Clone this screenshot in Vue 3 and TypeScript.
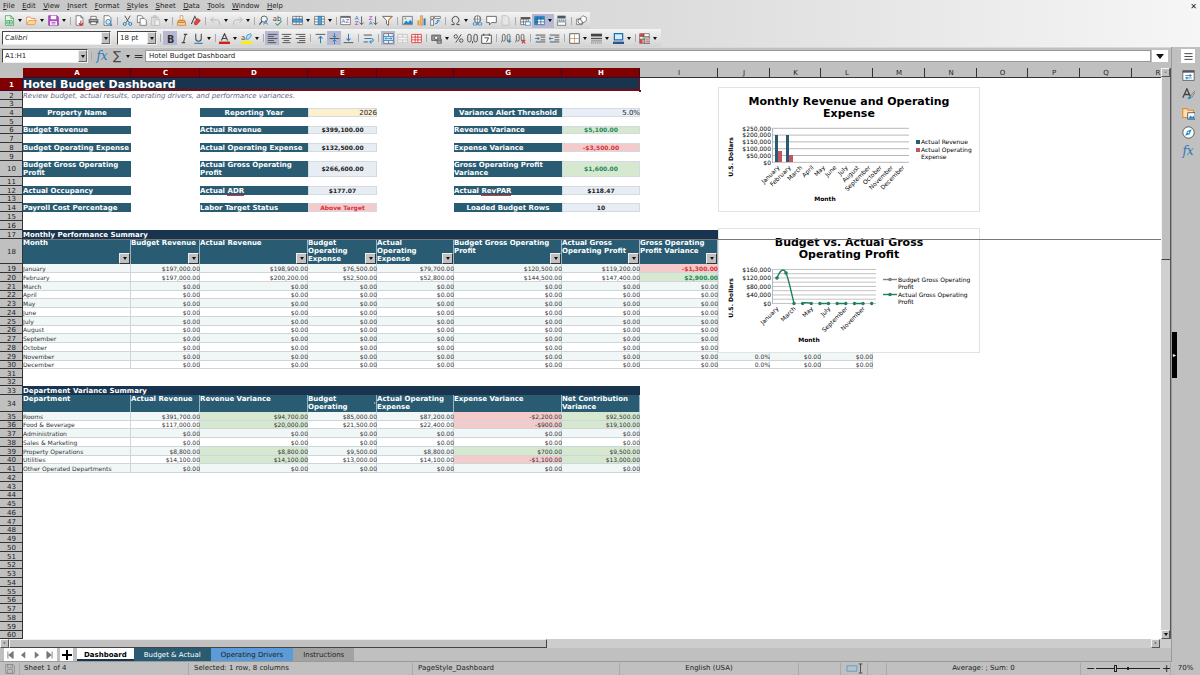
<script setup lang="ts">
import { ref } from 'vue'

type Cell = { text: string; cls: string; span?: number; flagged?: string; filter?: boolean }
type Row = { n: number; height: number; cells: Cell[] }
type Tool = { kind: 'icon' | 'arrow' | 'sep'; name: string; on?: boolean }

const menus = ['File', 'Edit', 'View', 'Insert', 'Format', 'Styles', 'Sheet', 'Data', 'Tools', 'Window', 'Help']

const page = '<path d="M3 1h7l3 3v11H3z" fill="#fff" stroke="#555"/>'
const lines = (xs: number[][]) =>
  xs.map(([x1, x2, y]) => `<path d="M${x1} ${y}H${x2}" stroke="#555" stroke-width="1.4"/>`).join('')

const icons: Record<string, string> = {
  new: '<path d="M2 1h8l4 4v10H2z" fill="#e9f7ec" stroke="#2f9a4b"/><path d="M4 8h8v5H4zM4 10.500h8M8 8v5" fill="none" stroke="#2f9a4b"/><path d="M10 1v4h4" fill="none" stroke="#2f9a4b"/>',
  open: '<path d="M1 13V3h5l1.500 2H13v3" fill="#fff" stroke="#e08a2c" stroke-width="1.200"/><path d="M1 14l3-6h11l-2.500 6z" fill="#fbd59b" stroke="#e08a2c"/>',
  save: '<path d="M1 1h12l2 2v12H1z" fill="#b04cc0" stroke="#8e2fa3"/><path d="M4 1h8v5H4zM3 9h10v6H3z" fill="#fff"/><path d="M5 11h6M5 13h6" stroke="#8e2fa3"/>',
  pdf: page + '<path d="M10 1v3h3" fill="none" stroke="#555"/><path d="M10 8v7M7 12l3 3 3-3" stroke="#d2342e" stroke-width="1.600" fill="none"/>',
  print: '<path d="M4 2h8v4H4z" fill="#fff" stroke="#555"/><path d="M1 6h14v6H1z" fill="#666"/><path d="M3 8h10" stroke="#ccc"/><path d="M4 10h8v4H4z" fill="#fff" stroke="#555"/>',
  preview: page + '<circle cx="9" cy="10" r="3.500" fill="#d6ecfa" stroke="#1e7fc2" stroke-width="1.300"/><path d="M11.500 12.500l3 3" stroke="#1e7fc2" stroke-width="1.500"/>',
  cut: '<path d="M4 1l6 10M12 1L6 11" stroke="#555" stroke-width="1.400"/><circle cx="4" cy="13" r="2.200" fill="none" stroke="#1e7fc2" stroke-width="1.400"/><circle cx="12" cy="13" r="2.200" fill="none" stroke="#1e7fc2" stroke-width="1.400"/>',
  copy: '<path d="M2 1h6l2 2v8H2z" fill="#fff" stroke="#555"/><path d="M6 5h6l3 3v7H6z" fill="#fff" stroke="#555"/>',
  paste: '<path d="M2 3h10v12H2zM5 1h4v3H5z" fill="#ddd" stroke="#b5b5b5"/><path d="M7 7h7v8H7z" fill="#eee" stroke="#b5b5b5"/>',
  clone: '<path d="M6 1h4v6H6z" fill="#fff" stroke="#d9812a"/><path d="M3 8h10v3H3z" fill="#f3b26b" stroke="#c96f1a"/><path d="M2 11h12v4H2z" fill="#f8d3a2" stroke="#c96f1a"/>',
  clear: '<path d="M2 13L7 2l3 6" fill="none" stroke="#444" stroke-width="1.500"/><path d="M6 11l5-6 4 3-5 6H7z" fill="#e2433b" stroke="#b52a23"/>',
  undo: '<path d="M5 3L1 7l4 4M1 7h8q5 0 5 7" fill="none" stroke="#b9b9b9" stroke-width="1.400"/>',
  redo: '<path d="M11 3l4 4-4 4M15 7H7q-5 0-5 7" fill="none" stroke="#b9b9b9" stroke-width="1.400"/>',
  find: '<circle cx="9" cy="6" r="4.500" fill="#eaf5fc" stroke="#555" stroke-width="1.300"/><path d="M6 9l-4 5" stroke="#555" stroke-width="1.800"/><path d="M8 14l3-6 3 6M9 12h4" stroke="#1e7fc2" fill="none"/>',
  spell: '<text x="1" y="9" font-size="10" font-family="DejaVu Sans" fill="#444">ab</text><path d="M5 12l3 3 6-6" fill="none" stroke="#2f9a6b" stroke-width="1.500"/>',
  row: '<path d="M1 2h14v12H1zM1 6h14M1 10h14M6 2v12M10.500 2v12" fill="#fff" stroke="#555"/><path d="M1 6h14v4H1z" fill="#4ba3e0" stroke="#1e6fae"/>',
  column: '<path d="M1 2h14v12H1zM1 6h14M1 10h14" fill="#fff" stroke="#555"/><path d="M6 2h5v12H6z" fill="#4ba3e0" stroke="#1e6fae"/>',
  sort: '<path d="M1 2h14v12H1z" fill="#fff" stroke="#555"/><path d="M1 2h14v2H1z" fill="#555"/><text x="2" y="12" font-size="8" font-family="DejaVu Sans" fill="#1e7fc2">A</text><text x="8" y="12" font-size="8" font-family="DejaVu Sans" fill="#a23bb5">Z</text>',
  asc: '<text x="1" y="7" font-size="8" font-family="DejaVu Sans" fill="#1e7fc2">A</text><text x="1" y="15" font-size="8" font-family="DejaVu Sans" fill="#a23bb5">Z</text><path d="M11 2v12M8 11l3 3 3-3" fill="none" stroke="#555" stroke-width="1.300"/>',
  desc: '<text x="1" y="7" font-size="8" font-family="DejaVu Sans" fill="#a23bb5">Z</text><text x="1" y="15" font-size="8" font-family="DejaVu Sans" fill="#1e7fc2">A</text><path d="M11 2v12M8 11l3 3 3-3" fill="none" stroke="#555" stroke-width="1.300"/>',
  filter: '<path d="M1 2h14L9.500 8v7l-3-2V8z" fill="#fff" stroke="#555" stroke-width="1.200"/><path d="M9 8l5-5" stroke="#e79a3c" stroke-width="2.200"/>',
  image: '<path d="M1 2h14v12H1z" fill="#dff0fb" stroke="#555"/><path d="M2 13l4-5 3 3 3-4 3 4v2z" fill="#2584c6"/><circle cx="5" cy="5" r="1.500" fill="#e79a3c"/>',
  chart: '<path d="M2 8h3v7H2z" fill="#e79a3c"/><path d="M6.500 1h3v14h-3z" fill="#f3b968" stroke="#d9812a" stroke-width=".8"/><path d="M11 5h3v10h-3z" fill="#2584c6"/>',
  pivot: '<path d="M1 2h4v4H1zM6.500 2H15v3H6.500zM1 7h4v8H1z" fill="#fff" stroke="#555"/><path d="M7 13q5 0 5-5M9.500 9.500L12 7l2.500 2.500" fill="none" stroke="#1e7fc2" stroke-width="1.400"/>',
  omega: '<path d="M2 14h4v-1.500Q2.500 10 3 6.500 4 2 8 2t5 4.500Q13.500 10 10 12.500V14h4" fill="none" stroke="#444" stroke-width="1.400"/>',
  link: '<circle cx="8" cy="6" r="5" fill="#fff" stroke="#555"/><path d="M3 6h10M8 1v10M5 2q-1.500 4 0 8M11 2q1.500 4 0 8" fill="none" stroke="#555" stroke-width=".8"/><path d="M2 11.500h5v3H2zM9 11.500h5v3H9zM6 13h4" fill="#fff" stroke="#1e7fc2" stroke-width="1.200"/>',
  comment: '<path d="M1 2h14v9H8l-3 3.500V11H1z" fill="#fff" stroke="#555" stroke-width="1.200"/>',
  header: '<path d="M3 1h7l3 3v11H3z" fill="#e6e6e6" stroke="#b5b5b5"/>',
  define: '<path d="M1 3h14v3H1z" fill="#555"/><path d="M1 6h11v8H1zM1 10h11M5 6v8M9 6v8" fill="#fff" stroke="#555"/><path d="M8 10h7v5H8z" fill="#fff" stroke="#1e7fc2"/>',
  freeze: '<path d="M1 2h14v12H1z" fill="#fff" stroke="#1c5f96"/><path d="M1 2h14v4H1zM1 6h4v8H1z" fill="#2584c6"/><path d="M1 6h14M5 2v12M10 2v12M1 10h14" stroke="#1c5f96"/>',
  split: '<path d="M2 1h12v4H2z" fill="#555"/><path d="M2 10h12v5H2z" fill="#fff" stroke="#555"/><path d="M1 7.500h14" stroke="#1e7fc2" stroke-width="1.400" stroke-dasharray="2 1"/>',
  shapes: '<path d="M1 6h8v8H1z" fill="#fff" stroke="#555"/><circle cx="7" cy="9" r="4" fill="none" stroke="#555"/><path d="M10 1l5 2.500v5L11 11 7 8V4z" fill="#fff" stroke="#555"/>',
  bold: '<text x="3" y="14" font-size="14" font-weight="700" font-family="DejaVu Sans" fill="#333">B</text>',
  italic: '<path d="M7 2h5M4 14h5M9.500 2L6.500 14" stroke="#444" stroke-width="1.500"/>',
  underline: '<path d="M4 1v7q0 4 4 4t4-4V1" fill="none" stroke="#444" stroke-width="1.500"/><path d="M2 15h12" stroke="#1e7fc2" stroke-width="1.600"/>',
  color: '<path d="M3.500 11L8 1l4.500 10M5 8h6" fill="none" stroke="#444" stroke-width="1.600"/><path d="M0 12.500h16V16H0z" fill="#c9211e"/>',
  highlight: '<text x="0" y="10" font-size="10" font-family="DejaVu Sans" fill="#444">a</text><path d="M7 9l2-6 5-2 1 3-4 5z" fill="#bcdcf3" stroke="#1e7fc2"/><path d="M0 12h16v4H0z" fill="#ffee00"/>',
  left: lines([[1, 15, 2], [1, 10, 5], [1, 15, 8], [1, 10, 11], [1, 13, 14]]),
  center: lines([[1, 15, 2], [4, 12, 5], [1, 15, 8], [4, 12, 11], [2, 14, 14]]),
  right: lines([[1, 15, 2], [6, 15, 5], [1, 15, 8], [6, 15, 11], [3, 15, 14]]),
  top: lines([[1, 15, 2]]) + '<path d="M8 15V5M5 8l3-3 3 3" fill="none" stroke="#1e7fc2" stroke-width="1.500"/>',
  middle: lines([[1, 15, 8]]) + '<path d="M8 0v6M5.500 4L8 6.500 10.500 4M8 16v-6M5.500 12L8 9.500l2.500 2.500" fill="none" stroke="#1e7fc2" stroke-width="1.300"/>',
  bottom: lines([[1, 15, 14]]) + '<path d="M8 1v10M5 8l3 3 3-3" fill="none" stroke="#1e7fc2" stroke-width="1.500"/>',
  wrap: lines([[1, 13, 3], [1, 7, 13]]) + '<path d="M2 8h10q3 0 3 2.500T12 13h-2M12 10.500L9.500 13l2.500 2.500" fill="none" stroke="#1e7fc2" stroke-width="1.400"/>',
  mergecenter: '<path d="M1 1h14v14H1zM1 5h14M1 11h14M8 1v4M8 11v4" fill="#fff" stroke="#555"/><path d="M1 5h14v6H1z" fill="#d6ecfa" stroke="#1e7fc2"/><path d="M3 8h10M5 6.500L3 8l2 1.500M11 6.500L13 8l-2 1.500" fill="none" stroke="#1e7fc2"/>',
  merge: '<path d="M1 2h14v12H1zM1 6h14M1 10h14M8 2v4M8 10v4" fill="#f2f2f2" stroke="#bbb"/>',
  unmerge: '<path d="M1 2h14v12H1zM1 6h14M1 10h14M6 2v12M10 2v12" fill="#fff" stroke="#d2342e" stroke-width="1.200"/>',
  currency: '<path d="M1 3h13v8H1z" fill="#999" stroke="#444"/><circle cx="7.500" cy="7" r="2.500" fill="#fff" stroke="#444"/><path d="M9 9h6v6H9z" fill="#ddd" stroke="#444"/><path d="M9 11h6M9 13h6" stroke="#444"/>',
  percent: '<circle cx="4" cy="5" r="2.500" fill="none" stroke="#444" stroke-width="1.300"/><circle cx="12" cy="11" r="2.500" fill="none" stroke="#444" stroke-width="1.300"/><path d="M12 2L4 14" stroke="#444" stroke-width="1.300"/>',
  number: '<rect x="1" y="2" width="5" height="11" rx="2.500" fill="none" stroke="#444" stroke-width="1.300"/><rect x="10" y="2" width="5" height="11" rx="2.500" fill="none" stroke="#444" stroke-width="1.300"/><path d="M8 12v3" stroke="#444" stroke-width="1.400"/>',
  date: '<path d="M1 3h14v12H1z" fill="#fff" stroke="#444" stroke-width="1.300"/><path d="M4 1v3M12 1v3" stroke="#444" stroke-width="1.400"/><path d="M5 7h6l-3 6" fill="none" stroke="#444" stroke-width="1.400"/>',
  adddec: '<rect x="2" y="2" width="4" height="10" rx="2" fill="none" stroke="#555" stroke-width="1.200"/><rect x="9" y="2" width="4" height="10" rx="2" fill="none" stroke="#555" stroke-width="1.200"/><path d="M.5 11v3" stroke="#555"/><path d="M9 12h6M12 9v6" stroke="#1e7fc2" stroke-width="1.500"/>',
  deldec: '<rect x="2" y="2" width="4" height="10" rx="2" fill="none" stroke="#555" stroke-width="1.200"/><rect x="9" y="2" width="4" height="10" rx="2" fill="none" stroke="#555" stroke-width="1.200"/><path d="M.5 11v3" stroke="#555"/><path d="M10 10l5 5M15 10l-5 5" stroke="#d2342e" stroke-width="1.500"/>',
  indent: lines([[1, 15, 3], [8, 15, 6], [8, 15, 10], [1, 15, 13]]) + '<path d="M0 8h6M3.500 5.500L6 8l-2.500 2.500" fill="none" stroke="#1e7fc2" stroke-width="1.300"/>',
  outdent: lines([[1, 15, 3], [8, 15, 6], [8, 15, 10], [1, 15, 13]]) + '<path d="M6 8H0M2.500 5.500L0 8l2.500 2.500" fill="none" stroke="#1e7fc2" stroke-width="1.300"/>',
  borders: '<path d="M1 1h14v14H1z" fill="#fff" stroke="#555" stroke-width="1.300"/><path d="M8 2v12M2 8h12" stroke="#c9863c"/>',
  style: '<path d="M0 1h16v4H0z" fill="#444"/><path d="M0 8h16" stroke="#555" stroke-width="2"/><path d="M0 11.500h16" stroke="#555"/><path d="M0 14.500h16" stroke="#555" stroke-dasharray="2 1"/>',
  bcolor: '<path d="M2 1h12v9H2z" fill="#d6ecfa" stroke="#1e6fae" stroke-width="1.800"/><path d="M0 12.500h16V16H0z" fill="#26588f"/>',
  cond: '<path d="M1 1h14v14H1z" fill="#fff" stroke="#555"/><path d="M1 1h7v4H1zM1 9h4v6H1z" fill="#e2433b"/><path d="M1 5h14M1 9h14M6 1v14" stroke="#555"/><path d="M8 7h8v8H8z" fill="#ddd" stroke="#555"/><path d="M9.500 10h5M9.500 12.500h5" stroke="#d2342e"/>',
  menu: '<path d="M3 4.500h10M3 8h10M3 11.500h10" stroke="#444" stroke-width="1.200"/>',
  properties: '<path d="M1 2h14v12H1z" fill="#fff" stroke="#555"/><path d="M1 2h14v2.500H1z" fill="#555"/><path d="M4 8h8M4 11h8" stroke="#2584c6"/><path d="M10 6.500v3M6 9.500v3" stroke="#1e7fc2" stroke-width="1.500"/>',
  styles: '<path d="M1 12L6 1l4 9M3 8h6" fill="none" stroke="#444" stroke-width="1.600"/><path d="M15.500 4l-5 6 1.500 1.500 4-6z" fill="#ddd" stroke="#555" stroke-width=".8"/><path d="M7 14q1-5 4-3.500 2 2.500-4 3.500z" fill="#2584c6"/>',
  gallery: '<path d="M1 13V2h5l1.500 2H14v9z" fill="#fce0b5" stroke="#e08a2c" stroke-width="1.300"/><path d="M7 7h9v8H7z" fill="#fff" stroke="#444"/><path d="M7.500 14.500l3-4 2 2 1.500-2 1.500 4z" fill="#2584c6"/>',
  navigator: '<circle cx="8" cy="8" r="7" fill="#fff" stroke="#555" stroke-width="1.200"/><path d="M12 4l-2.500 6L4 12l2.500-6z" fill="#2a8fcb"/><circle cx="8" cy="8" r="1" fill="#fff"/>',
}

const i = (name: string, on = false): Tool => ({ kind: 'icon', name, on })
const a = (name: string): Tool => ({ kind: 'arrow', name })
const s: Tool = { kind: 'sep', name: '' }

const standardBar: Tool[] = [
  i('new'), a('new'), i('open'), a('open'), i('save'), a('save'), s,
  i('pdf'), i('print'), i('preview'), s, i('cut'), i('copy'), i('paste'), a('paste'), s,
  i('clone'), i('clear'), s, i('undo'), a('undo'), i('redo'), a('redo'), s, i('find'), i('spell'), s,
  i('row'), a('row'), i('column'), a('column'), s, i('sort'), i('asc'), i('desc'), i('filter'), s,
  i('image'), i('chart'), i('pivot'), s, i('omega'), a('omega'), i('link'), i('comment'), i('header'), s,
  i('define'), i('freeze', true), { kind: 'arrow', name: 'freeze', on: true }, i('split'), s, i('shapes'),
]
const formatBar: Tool[] = [
  s, i('bold', true), i('italic'), i('underline'), a('underline'), s, i('color'), a('color'), i('highlight'), a('highlight'), s,
  i('left', true), i('center'), i('right'), s, i('top'), i('middle', true), i('bottom'), s, i('wrap'), s,
  i('mergecenter', true), i('merge'), i('unmerge'), s, i('currency'), a('currency'), i('percent'), i('number'), i('date'), s,
  i('adddec'), i('deldec'), s, i('indent'), i('outdent'), s, i('borders'), a('borders'), i('style'), a('style'),
  i('bcolor'), a('bcolor'), s, i('cond'), a('cond'),
]

const columns = [
  { name: 'A', width: 108 }, { name: 'C', width: 69 }, { name: 'D', width: 108 }, { name: 'E', width: 69 },
  { name: 'F', width: 77 }, { name: 'G', width: 108 }, { name: 'H', width: 78 }, { name: 'I', width: 78 },
  { name: 'J', width: 52 }, { name: 'K', width: 51 }, { name: 'L', width: 52 }, { name: 'M', width: 52 },
  { name: 'N', width: 52 }, { name: 'O', width: 51 }, { name: 'P', width: 52 }, { name: 'Q', width: 52 },
  { name: 'R', width: 52 },
]
const selectedColumns = 7

const c = (text = '', cls = '', extra: Partial<Cell> = {}): Cell => ({ text, cls, ...extra })
const blank = (): Cell => c()

const kpi = (l1: string, l2: string, v2: Cell, l3: string, v3: Cell): Cell[] => [
  c(l1, 'label'), blank(), c(l2, 'label'), v2, blank(), c(l3, 'label'), v3,
]
const months = ['January', 'February', 'March', 'April', 'May', 'June', 'July', 'August', 'September', 'October', 'November', 'December']
const loaded: Record<string, string[]> = {
  January: ['$197,000.00', '$198,900.00', '$76,500.00', '$79,700.00', '$120,500.00', '$119,200.00', '-$1,300.00'],
  February: ['$197,000.00', '$200,200.00', '$52,500.00', '$52,800.00', '$144,500.00', '$147,400.00', '$2,900.00'],
}
const departments: [string, string[]][] = [
  ['Rooms', ['$391,700.00', '$94,700.00', '$85,000.00', '$87,200.00', '-$2,200.00', '$92,500.00']],
  ['Food & Beverage', ['$117,000.00', '$20,000.00', '$21,500.00', '$22,400.00', '-$900.00', '$19,100.00']],
  ['Administration', []],
  ['Sales & Marketing', []],
  ['Property Operations', ['$8,800.00', '$8,800.00', '$9,500.00', '$8,800.00', '$700.00', '$9,500.00']],
  ['Utilities', ['$14,100.00', '$14,100.00', '$13,000.00', '$14,100.00', '-$1,100.00', '$13,000.00']],
  ['Other Operated Departments', []],
]
const tone = (v: string) => (v === '$0.00' ? '' : v.startsWith('-') ? ' bad' : ' good')

const content: Record<number, Cell[]> = {
  1: [c('Hotel Budget Dashboard', 'title', { span: 7 })],
  2: [c('Review budget, actual results, operating drivers, and performance variances.', 'subtitle', { span: 7 })],
  4: [c('Property Name', 'label mid'), blank(), c('Reporting Year', 'label mid'), c('2026', 'entry year'), blank(),
    c('Variance Alert Threshold', 'label mid'), c('5.0%', 'entry')],
  6: kpi('Budget Revenue', 'Actual Revenue', c('$399,100.00', 'value'), 'Revenue Variance', c('$5,100.00', 'value good strong')),
  8: kpi('Budget Operating Expense', 'Actual Operating Expense', c('$132,500.00', 'value'), 'Expense Variance', c('-$3,500.00', 'value bad strong')),
  10: kpi('Budget Gross Operating\nProfit', 'Actual Gross Operating\nProfit', c('$266,600.00', 'value'), 'Gross Operating Profit\nVariance', c('$1,600.00', 'value good strong')),
  12: [c('Actual Occupancy', 'label'), blank(), c('Actual ', 'label', { flagged: 'ADR' }), c('$177.07', 'value'), blank(),
    c('Actual ', 'label', { flagged: 'RevPAR' }), c('$118.47', 'value')],
  14: [c('Payroll Cost Percentage', 'label'), blank(), c('Labor Target Status', 'label'), c('Above Target', 'value bad strong'), blank(),
    c('Loaded Budget Rows', 'label mid'), c('10', 'value')],
  17: [c('Monthly Performance Summary', 'section', { span: 8 })],
  18: ['Month', 'Budget Revenue', 'Actual Revenue', 'Budget\nOperating\nExpense', 'Actual\nOperating\nExpense',
    'Budget Gross Operating\nProfit', 'Actual Gross\nOperating Profit', 'Gross Operating\nProfit Variance'].map((t) => c(t, 'head', { filter: true })),
  33: [c('Department Variance Summary', 'section', { span: 7 })],
  34: ['Department', 'Actual Revenue', 'Revenue Variance', 'Budget\nOperating', 'Actual Operating\nExpense', 'Expense Variance',
    'Net Contribution\nVariance'].map((t, k) => c(t, k === 3 ? 'head overflow' : 'head')),
}
months.forEach((m, k) => {
  const band = k % 2 === 0 ? ' band' : ''
  const values = loaded[m] ?? Array(7).fill('$0.00')
  const row = [c(m, 'data name' + band), ...values.map((v, n) => c(v, 'data' + band + (n === 6 && tone(v) ? tone(v) + ' strong' : '')))]
  if (k >= 10) row.push(c('0.0%', 'data' + band), c('$0.00', 'data' + band), c('$0.00', 'data' + band))
  content[19 + k] = row
})
departments.forEach(([name, list], k) => {
  const band = k % 2 === 0 ? ' band' : ''
  const values = list.length ? list : Array(6).fill('$0.00')
  content[35 + k] = [c(name, 'data name' + band), ...values.map((v, n) => c(v, 'data' + band + ([1, 4, 5].includes(n) ? tone(v) : '')))]
})

const tall: Record<number, number> = { 1: 13, 10: 16, 18: 25, 34: 17 }
const short = [3, 6, 13, 22, 26, 30, 32, 36, 40, 44, 48, 52, 56, 60]
const rows: Row[] = Array.from({ length: 60 }, (_, k) => {
  const n = k + 1
  const cells = [...(content[n] ?? [])]
  const used = cells.reduce((sum, cell) => sum + (cell.span ?? 1), 0)
  for (let x = used; x < columns.length; x++) cells.push(blank())
  return { n, height: tall[n] ?? (short.includes(n) ? 8 : 9), cells }
})

const profitMonths = ['January', 'March', 'May', 'July', 'September', 'November']
const dots = Array.from({ length: 10 }, (_, k) => 76 + k * 8.63)

const tabs = [
  { name: 'Dashboard', cls: 'active' },
  { name: 'Budget & Actual', cls: 'teal' },
  { name: 'Operating Drivers', cls: 'blue' },
  { name: 'Instructions', cls: 'plain' },
]
const fontName = ref('Calibri')
const fontSize = ref('18 pt')
const cellRange = ref('A1:H1')
const formula = ref('Hotel Budget Dashboard')
const zoom = ref(29)
</script>

<template>
  <div class="app">
    <header class="top">
      <div class="menubar">
        <nav class="menus">
          <button v-for="m in menus" :key="m"><u>{{ m[0] }}</u>{{ m.slice(1) }}</button>
        </nav>
        <button class="close" aria-label="Close document">✕</button>
      </div>
      <div class="toolbar">
        <template v-for="(t, k) in standardBar" :key="k">
          <span v-if="t.kind === 'sep'" class="sep"></span>
          <button v-else-if="t.kind === 'arrow'" class="arrow" :class="{ on: t.on }" :aria-label="t.name + ' options'"><i class="caret"></i></button>
          <button v-else class="tool" :class="{ on: t.on }" :aria-label="t.name"><svg viewBox="0 0 16 16" v-html="icons[t.name]"></svg></button>
        </template>
      </div>
      <div class="toolbar">
        <span class="combo font"><input v-model="fontName" aria-label="Font name" /><button aria-label="Choose font"><i class="caret"></i></button></span>
        <span class="combo size"><input v-model="fontSize" aria-label="Font size" /><button aria-label="Choose size"><i class="caret"></i></button></span>
        <template v-for="(t, k) in formatBar" :key="k">
          <span v-if="t.kind === 'sep'" class="sep"></span>
          <button v-else-if="t.kind === 'arrow'" class="arrow" :aria-label="t.name + ' options'"><i class="caret"></i></button>
          <button v-else class="tool" :class="{ on: t.on }" :aria-label="t.name"><svg viewBox="0 0 16 16" v-html="icons[t.name]"></svg></button>
        </template>
      </div>
    </header>

    <div class="body">
      <main class="main">
        <div class="formulabar">
          <span class="combo range"><input v-model="cellRange" aria-label="Name box" /><button aria-label="Named ranges"><i class="caret"></i></button></span>
          <span class="sep"></span>
          <button class="fx" aria-label="Function wizard">fx</button>
          <button class="sigma" aria-label="Select function">∑</button>
          <button class="arrow" aria-label="Function list"><i class="caret"></i></button>
          <button class="equals" aria-label="Formula">=</button>
          <input v-model="formula" class="formula" aria-label="Input line" />
          <button class="expand" aria-label="Expand formula bar"><i class="caret big"></i></button>
        </div>

        <div class="sheetarea">
          <div class="sheet">
            <table>
              <colgroup>
                <col class="rowcol" />
                <col v-for="col in columns" :key="col.name" :style="{ width: col.width + 'px' }" />
              </colgroup>
              <thead>
                <tr>
                  <th class="corner"></th>
                  <th v-for="(col, k) in columns" :key="col.name" :class="{ picked: k < selectedColumns }">{{ col.name }}</th>
                </tr>
              </thead>
              <tbody>
                <tr v-for="row in rows" :key="row.n" :style="{ height: row.height + 'px' }">
                  <th scope="row" :class="{ picked: row.n === 1 }">{{ row.n }}</th>
                  <td v-for="(cell, k) in row.cells" :key="k" :colspan="cell.span ?? 1" :class="cell.cls">{{ cell.text }}<span v-if="cell.flagged" class="flagged">{{ cell.flagged }}</span><button v-if="cell.filter" class="filter" :aria-label="'Filter ' + cell.text"><i class="caret"></i></button></td>
                </tr>
              </tbody>
            </table>

            <svg class="chart first" viewBox="0 0 262 125" role="img" aria-label="Monthly Revenue and Operating Expense">
              <rect x="0.500" y="0.500" width="261" height="124" fill="#fff" stroke="#e2e2e2" />
              <text class="ctitle" x="131" y="18">Monthly Revenue and Operating</text>
              <text class="ctitle" x="131" y="30">Expense</text>
              <path v-for="k in 6" :key="k" :d="`M54 ${34.5 + k * 6.8}H191`" stroke="#b8b8b8" />
              <path d="M54.500 41v34.500" stroke="#b8b8b8" />
              <text v-for="(t, k) in ['$250,000', '$200,000', '$150,000', '$100,000', '$50,000', '$0']" :key="t" class="axis" x="53" :y="43.500 + k * 6.8">{{ t }}</text>
              <path d="M57 48h3v27h-3zM68 48h3v27h-3z" fill="#285a72" />
              <path d="M60 64h4v11h-4zM71 68h4v7h-4z" fill="#c4575e" />
              <text v-for="(m, k) in months" :key="m" class="axis" :transform="`translate(${62 + k * 11.36} 81) rotate(-45)`">{{ m }}</text>
              <text class="caption" x="107" y="114">Month</text>
              <text class="caption" transform="translate(15 70) rotate(-90)">U.S. Dollars</text>
              <path d="M198 53h4v4h-4z" fill="#285a72" />
              <path d="M198 61h4v4h-4z" fill="#c4575e" />
              <text class="legend" x="203" y="57">Actual Revenue</text>
              <text class="legend" x="203" y="65">Actual Operating</text>
              <text class="legend" x="203" y="72">Expense</text>
            </svg>

            <svg class="chart second" viewBox="0 0 262 125" role="img" aria-label="Budget vs. Actual Gross Operating Profit">
              <rect x="0.500" y="0.500" width="261" height="124" fill="#fff" stroke="#e2e2e2" />
              <text class="ctitle" x="131" y="18">Budget vs. Actual Gross</text>
              <text class="ctitle" x="131" y="30">Operating Profit</text>
              <path v-for="k in 9" :key="k" :d="`M54 ${37.2 + k * 4.25}H158`" stroke="#c2c2c2" />
              <path d="M54.500 41v34.500" stroke="#b8b8b8" />
              <text v-for="(t, k) in ['$160,000', '$120,000', '$80,000', '$40,000', '$0']" :key="t" class="axis" x="53" :y="43.500 + k * 8.5">{{ t }}</text>
              <path d="M59 50C61 45 63 42 65 42s2 1 3 3c3 7 6 23 8 30M85 75q4-1 8 .5M102 75.500h9M119 75.500h9M136 75.500h9" fill="none" stroke="#1d8060" stroke-width="1.400" />
              <circle cx="59" cy="50" r="1.800" fill="#1d8060" />
              <circle cx="68" cy="45" r="1.800" fill="#1d8060" />
              <circle v-for="x in dots" :key="x" :cx="x" cy="75.500" r="1.700" fill="#1d8060" />
              <text v-for="(m, k) in profitMonths" :key="m" class="axis" :transform="`translate(${61 + k * 17.26} 81) rotate(-45)`">{{ m }}</text>
              <text class="caption" x="91" y="114">Month</text>
              <text class="caption" transform="translate(15 70) rotate(-90)">U.S. Dollars</text>
              <path d="M165 51.500h14" stroke="#7d8585" stroke-width="1.400" />
              <circle cx="172" cy="51.500" r="1.800" fill="#7d8585" />
              <path d="M165 66.500h14" stroke="#1d8060" stroke-width="1.400" />
              <circle cx="172" cy="66.500" r="1.800" fill="#1d8060" />
              <text class="legend" x="180" y="54">Budget Gross Operating</text>
              <text class="legend" x="180" y="61">Profit</text>
              <text class="legend" x="180" y="69">Actual Gross Operating</text>
              <text class="legend" x="180" y="76">Profit</text>
            </svg>
            <div class="freezeline"></div>
          </div>
          <div class="vscroll">
            <button aria-label="Scroll up">-</button>
            <span class="vthumb"></span>
            <span class="vtrack"></span>
            <button aria-label="Scroll down"><i class="caret"></i></button>
          </div>
        </div>

        <div class="hscroll">
          <button aria-label="Scroll left">‹</button>
          <span class="hthumb"></span>
          <span class="htrack"></span>
          <button class="next" aria-label="Scroll right">›</button>
        </div>

        <div class="tabs">
          <div class="tabnav">
            <button aria-label="First sheet"><svg viewBox="0 0 8 8"><path d="M1 0v8M7 0L2 4l5 4z" fill="#777" stroke="#777" /></svg></button>
            <button aria-label="Previous sheet"><svg viewBox="0 0 8 8"><path d="M6 0L1 4l5 4z" fill="#777" /></svg></button>
            <button aria-label="Next sheet"><svg viewBox="0 0 8 8"><path d="M2 0l5 4-5 4z" fill="#777" /></svg></button>
            <button aria-label="Last sheet"><svg viewBox="0 0 8 8"><path d="M7 0v8M1 0l5 4-5 4z" fill="#777" stroke="#777" /></svg></button>
          </div>
          <button class="add" aria-label="Add sheet"><svg viewBox="0 0 12 12"><path d="M6 1v10M1 6h10" stroke="#000" stroke-width="2" /></svg></button>
          <button v-for="t in tabs" :key="t.name" class="tab" :class="t.cls">{{ t.name }}</button>
        </div>
      </main>

      <aside class="sidebar">
        <button class="white" aria-label="Sidebar settings"><svg viewBox="0 0 16 16" v-html="icons.menu"></svg></button>
        <button v-for="n in ['properties', 'styles', 'gallery', 'navigator']" :key="n" :aria-label="n"><svg viewBox="0 0 16 16" v-html="icons[n]"></svg></button>
        <button class="fx" aria-label="Functions">fx</button>
        <button class="handle" aria-label="Toggle sidebar">▸</button>
      </aside>
    </div>

    <footer class="status">
      <span class="sheetno"><svg viewBox="0 0 16 16"><path d="M1 1h12l2 2v12H1zM4 1h8v5H4zM4 9h8v6H4z" fill="none" stroke="#888" stroke-width="1.300" /></svg><b></b>Sheet 1 of 4</span>
      <span>Selected: 1 row, 8 columns</span>
      <span>PageStyle_Dashboard</span>
      <span class="mid">English (USA)</span>
      <span></span>
      <span class="mode"><svg viewBox="0 0 22 12"><path d="M1 3h11v6H1z" fill="none" stroke="#4aa0cf" /><path d="M14 1h4M14 11h4M16 1v10" stroke="#444" /></svg></span>
      <span></span>
      <span class="mid">Average: ; Sum: 0</span>
      <span class="zoomer"><button aria-label="Zoom out">−</button><input v-model="zoom" type="range" min="0" max="100" aria-label="Zoom" /><button aria-label="Zoom in">+</button></span>
      <span class="mid">70%</span>
    </footer>
  </div>
</template>

<style>
html,
body {
  margin: 0;
  background: #c0c0c0;
}
</style>

<style scoped>
.app {
  display: flex;
  flex-direction: column;
  height: 100vh;
  overflow: hidden;
  font: 7px/9px 'DejaVu Sans', sans-serif;
  color: #222;
  background: #c0c0c0;
}
button,
input {
  margin: 0;
  padding: 0;
  border: 0;
  border-radius: 0;
  background: none;
  font: inherit;
  color: inherit;
  outline: 0;
}
svg {
  display: block;
}
.top {
  height: 47px;
  flex: none;
  background: linear-gradient(90deg, #c6c6c6, #dcdcdc 55%, #f6f6f6);
}
.menubar {
  display: flex;
  align-items: center;
  justify-content: space-between;
  height: 12px;
  padding: 0 3px;
}
.menus {
  display: flex;
  justify-content: space-between;
  width: 280px;
}
.close {
  font-size: 8px;
}
.toolbar {
  display: flex;
  align-items: center;
  width: max-content;
  height: 17px;
  padding: 0 2px;
  background: linear-gradient(#f4f4f4, #d2d2d2);
}
.toolbar + .toolbar {
  height: 18px;
}
.tool {
  display: flex;
  align-items: center;
  justify-content: center;
  width: 14px;
  height: 14px;
}
.tool svg {
  width: 11px;
  height: 11px;
}
.on {
  background: #b7b8d2;
}
.arrow {
  display: flex;
  align-items: center;
  justify-content: center;
  width: 8px;
  height: 14px;
}
.caret {
  border: 2px solid transparent;
  border-top: 3px solid #111;
  border-bottom: 0;
}
.caret.big {
  border-width: 5px 4px 0;
}
.sep {
  display: flex;
  justify-content: center;
  width: 6px;
  height: 8px;
}
.sep::before {
  content: '';
  width: 1px;
  background: #aaa;
}
.arrow + .sep {
  width: 4px;
}
.combo {
  display: flex;
  box-sizing: border-box;
  height: 14px;
  background: #fff;
  border: 1px solid #eee;
  border-top-color: #444;
  border-left-color: #444;
}
.combo input {
  flex: 1;
  min-width: 0;
  padding-left: 2px;
}
.combo button {
  display: flex;
  align-items: center;
  justify-content: center;
  width: 9px;
  background: #c0c0c0;
  border: 1px solid #666;
  border-top-color: #eee;
  border-left-color: #eee;
  box-sizing: border-box;
}
.font {
  width: 109px;
  font-style: italic;
}
.size {
  width: 40px;
  margin-left: 6px;
}
.body {
  display: flex;
  flex: 1;
  min-height: 0;
}
.main {
  display: flex;
  flex-direction: column;
  flex: 1;
  min-width: 0;
}
.formulabar {
  display: flex;
  align-items: center;
  box-sizing: border-box;
  height: 21px;
  padding: 0 3px 4px 2px;
  border-top: 1px solid #d8d8d8;
}
.range {
  width: 86px;
}
.fx {
  width: 16px;
  font: italic 12px/14px 'DejaVu Serif', serif;
  color: #2a7ab8;
}
.sigma {
  width: 14px;
  font-size: 12px;
  line-height: 13px;
  color: #444;
}
.equals {
  width: 13px;
  font-size: 12px;
  color: #333;
}
.formula {
  flex: 1;
  height: 12px;
  box-sizing: border-box;
  padding-left: 3px;
  background: #fff;
  border: 1px solid #999;
}
.expand {
  display: flex;
  align-items: center;
  justify-content: center;
  width: 16px;
  height: 12px;
  margin-left: 1px;
  background: #fff;
}
.sheetarea {
  display: flex;
  flex: 1;
  min-height: 0;
}
.sheet {
  position: relative;
  flex: 1;
  min-width: 0;
  overflow: hidden;
  background: #fff;
}
table {
  width: 1158px;
  table-layout: fixed;
  border-spacing: 0;
  border-collapse: separate;
}
.rowcol {
  width: 23px;
}
thead tr {
  height: 10px;
}
th,
td {
  padding: 0;
  line-height: 8px;
}
th {
  background: #c0c0c0;
  font-weight: 400;
  box-shadow: inset -1px -1px 0 #333;
}
th.corner {
  box-shadow: none;
}
th.picked {
  background: #800000;
  color: #fff;
  font-weight: 700;
  box-shadow: inset -1px -1px 0 #3a0a2e;
}
td {
  position: relative;
  white-space: pre;
  vertical-align: middle;
}
.title {
  background: #18344f;
  color: #fff;
  font-size: 11px;
  font-weight: 700;
  line-height: 13px;
  box-shadow: inset -1px -2px 0 #7a0c14;
}
.title::after {
  content: '';
  position: absolute;
  right: -1px;
  bottom: -1px;
  width: 2px;
  height: 2px;
  background: #7a0c14;
}
.subtitle {
  color: #5c6880;
  font-style: italic;
}
.label {
  background: #295c72;
  color: #fff;
  font-weight: 700;
}
td.mid {
  text-align: center;
}
.flagged {
  border-bottom: 1px solid #d8323c;
}
.entry {
  background: #e9edf7;
  text-align: right;
  box-shadow: inset 0 0 0 1px #d5dbe2;
}
.year {
  background: #fdf0cd;
}
.value {
  background: #e8edf3;
  font-size: 6px;
  font-weight: 700;
  text-align: center;
  box-shadow: inset 0 0 0 1px #d3dae0;
}
.section {
  background: #18344f;
  color: #fff;
  font-weight: 700;
}
.head {
  background: #295c72;
  color: #fff;
  font-weight: 700;
  vertical-align: top;
  box-shadow: inset -1px 0 0 #9db4c0;
}
.overflow::after {
  content: '';
  position: absolute;
  right: 1px;
  top: 7px;
  border: 1px solid transparent;
  border-left: 2px solid #e8a0a0;
  border-right: 0;
}
.filter {
  position: absolute;
  right: 1px;
  bottom: 0;
  display: flex;
  align-items: center;
  justify-content: center;
  width: 11px;
  height: 11px;
  box-sizing: border-box;
  background: #c0c0c0;
  border: 1px solid #333;
  border-top-color: #eee;
  border-left-color: #eee;
}
.data {
  font-size: 6px;
  text-align: right;
  color: #333;
  box-shadow: inset -1px -1px 0 #ccd7dc;
}
.data.name {
  text-align: left;
}
.band {
  background: #f1f6f7;
}
.good {
  background: #d6e9d0;
}
.bad {
  background: #f5caca;
}
.strong {
  font-weight: 700;
}
.good.strong {
  color: #1d8758;
}
.bad.strong {
  color: #d8323c;
}
.chart {
  position: absolute;
  left: 718px;
  width: 262px;
  height: 125px;
}
.first {
  top: 19px;
}
.second {
  top: 160px;
}
.ctitle {
  font-size: 11px;
  font-weight: 700;
  text-anchor: middle;
  fill: #000;
}
.axis {
  font-size: 6px;
  text-anchor: end;
}
.legend {
  font-size: 6px;
}
.caption {
  font-size: 6px;
  font-weight: 700;
  text-anchor: middle;
  fill: #000;
}
.freezeline {
  position: absolute;
  top: 171px;
  left: 23px;
  right: 0;
  height: 1px;
  background: #777;
}
.vscroll {
  display: flex;
  flex-direction: column;
  width: 10px;
  background: #d0d0d0;
  border-right: 1px solid #555;
  box-sizing: border-box;
}
.vscroll button,
.hscroll button {
  display: flex;
  align-items: center;
  justify-content: center;
  width: 9px;
  height: 9px;
  flex: none;
  box-sizing: border-box;
  background: #c0c0c0;
  border: 1px solid #555;
  border-top-color: #f4f4f4;
  border-left-color: #f4f4f4;
}
.vthumb {
  flex: 33;
  background: #c0c0c0;
  border-left: 1px solid #f4f4f4;
  border-bottom: 1px solid #444;
}
.vtrack {
  flex: 67;
}
.hscroll {
  display: flex;
  height: 9px;
  padding-right: 11px;
  background: #cdcdcd;
}
.hthumb {
  flex: 47;
  background: #c0c0c0;
  border: 1px solid #f0f0f0;
  border-right-color: #444;
  border-bottom-color: #444;
}
.htrack {
  flex: 53;
}
.tabs {
  display: flex;
  height: 14px;
  padding-left: 4px;
  border-bottom: 1px solid #999;
  box-sizing: border-box;
}
.tabnav {
  display: flex;
  width: 53px;
  margin-right: 3px;
  background: #fff;
}
.tabnav button {
  display: flex;
  align-items: center;
  justify-content: center;
  width: 13px;
}
.tabnav svg {
  width: 7px;
  height: 8px;
}
.add {
  display: flex;
  align-items: center;
  justify-content: center;
  width: 13px;
  margin-right: 4px;
  background: #fff;
}
.add svg {
  width: 12px;
  height: 12px;
}
.tab {
  padding: 1px 10px 0;
}
.active {
  padding: 1px 7px 0;
  background: #fff;
  color: #000;
  font-weight: 700;
  box-shadow: inset 0 -2px 0 #18344f;
}
.teal {
  background: #295c72;
  color: #fff;
}
.blue {
  background: #5a9bd8;
}
.plain {
  background: #a2a2a2;
}
.sidebar {
  position: relative;
  display: flex;
  flex-direction: column;
  align-items: center;
  gap: 5px;
  width: 29px;
  padding: 2px 0 0 4px;
  box-sizing: border-box;
  border-left: 1px solid #999;
}
.sidebar button {
  display: flex;
  align-items: center;
  justify-content: center;
  width: 14px;
  height: 14px;
}
.sidebar button svg {
  width: 13px;
  height: 13px;
}
.sidebar .white {
  background: #fff;
}
.sidebar .handle {
  position: absolute;
  left: 0;
  top: 50%;
  width: 5px;
  height: 46px;
  margin-top: -23px;
  background: #000;
  color: #fff;
  font-size: 6px;
}
.status {
  display: grid;
  grid-template-columns: 188fr 224fr 207fr 179fr 42px 27px 19px 194fr 90px 30px;
  height: 13px;
  flex: none;
  align-items: center;
}
.status > span {
  display: flex;
  align-items: center;
  height: 12px;
  padding-left: 5px;
  border-left: 1px solid #aaa;
  box-sizing: border-box;
}
.status > .sheetno {
  border-left: 0;
}
.sheetno svg {
  width: 10px;
  height: 10px;
}
.sheetno b {
  width: 1px;
  height: 12px;
  margin: 0 4px;
  background: #aaa;
}
.status > .mid {
  justify-content: center;
  padding: 0;
}
.mode svg {
  width: 20px;
  height: 11px;
}
.zoomer button {
  width: 8px;
  font-size: 11px;
}
.zoomer input {
  appearance: none;
  flex: 1;
  min-width: 0;
  height: 8px;
  margin: 0 2px;
  background:
    linear-gradient(#222, #222) center / 2px 3px no-repeat,
    linear-gradient(#222, #222) center / 100% 1px no-repeat;
}
.zoomer input::-webkit-slider-thumb {
  appearance: none;
  width: 3px;
  height: 7px;
  background: #c0c0c0;
  border: 1px solid #222;
  box-sizing: border-box;
}
</style>
